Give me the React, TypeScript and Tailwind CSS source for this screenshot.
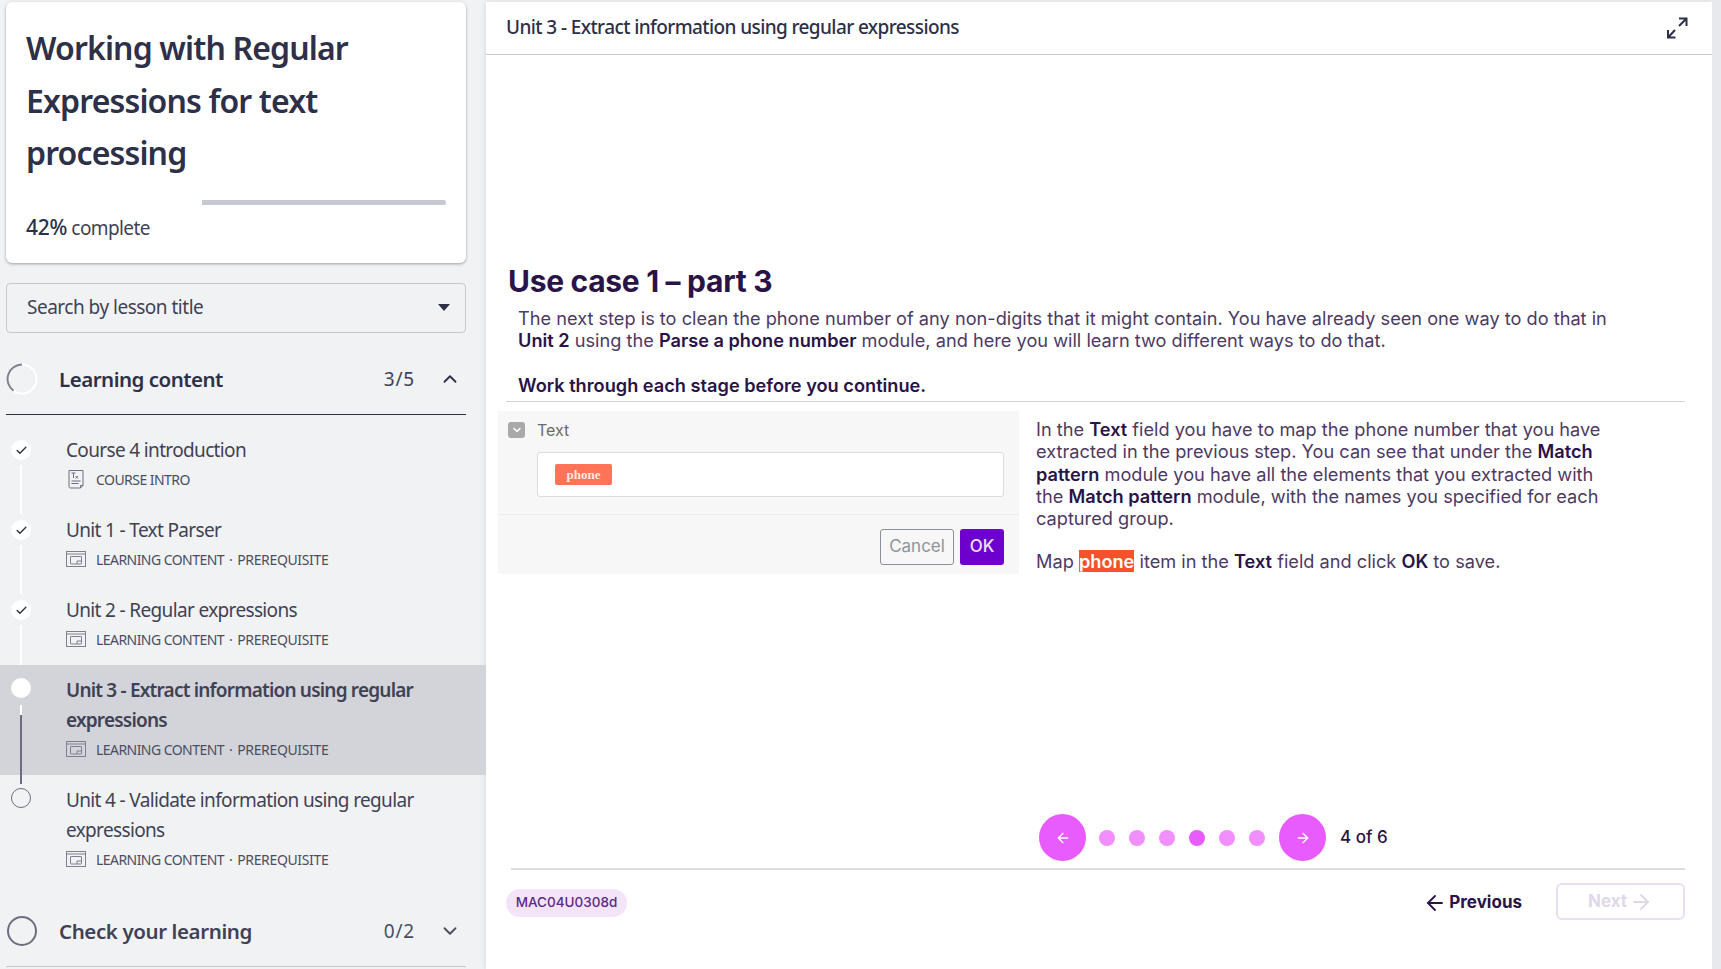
import React from "react";
import { ChevronUp, ChevronDown, Check, ArrowLeft, ArrowRight } from "lucide-react";

const side = { fontFamily: '"Noto Sans", sans-serif' };

function MetaIcon({ intro }: { intro?: boolean }) {
  if (intro) {
    return (
      <svg width="20" height="20" viewBox="0 0 20 20" fill="none" stroke="#6b6f80" strokeWidth="1">
        <path d="M3 1.500h14v15l-2.500 2.500H4.500A1.500 1.500 0 0 1 3 17.500z" />
        <path d="M14.500 19v-2.500H17" />
        <path d="M5.500 4h4M7.500 4v5M9.500 7l2.500 2.500M12 7l-2.500 2.500M5.500 12h9M5.500 14.500h7" />
      </svg>
    );
  }
  return (
    <svg width="20" height="16" viewBox="0 0 20 16" fill="none" stroke="#7d808e" strokeWidth="1">
      <rect x="0.500" y="0.500" width="19" height="15" />
      <path d="M0.500 3h19" />
      <rect x="4.500" y="5.500" width="11" height="7.500" rx="0.500" />
      <path d="M11 13v-3h4.500" />
    </svg>
  );
}

type ItemProps = {
  title: React.ReactNode;
  intro?: boolean;
  state: "done" | "current" | "todo";
  tall?: boolean;
  line?: "white" | "mixed" | "none";
};

function Item({ title, intro, state, tall, line }: ItemProps) {
  return (
    <div className={`relative flex pl-[11px] pr-[40px] pt-[10px] ${tall ? "h-[110px]" : "h-[80px]"} ${state === "current" ? "bg-[#d3d4d9]" : ""}`}>
      {line === "white" && <div className="absolute left-[20px] top-[40px] h-[49px] w-[2px] bg-white" />}
      {line === "mixed" && (
        <div className="absolute left-[20px] top-[40px] z-10 flex h-[79px] w-[2px] flex-col bg-[#6b6e7f]">
          <div className="h-[10px] bg-white" />
        </div>
      )}
      <div className="mt-[5px] h-[20px] w-[20px] shrink-0">
        {state === "done" && (
          <div className="flex h-[20px] w-[20px] items-center justify-center rounded-full bg-white">
            <Check size={13} strokeWidth={2.500} color="#2d3047" />
          </div>
        )}
        {state === "current" && <div className="-mt-[2px] h-[20px] w-[20px] rounded-full bg-white" />}
        {state === "todo" && <div className="-mt-[2px] h-[20px] w-[20px] rounded-full border border-[#6b6e7f]" />}
      </div>
      <div className="ml-[35px] min-w-0">
        <div className={`text-[19px] leading-[30px] text-[#3f4254] ${state === "current" ? "font-semibold tracking-[-0.8px]" : "tracking-[-0.65px]"}`}>{title}</div>
        <div className="-mt-[1px] flex h-[30px] items-center text-[14px] tracking-[-0.55px] text-[#4b4e60]">
          <span className="flex w-[30px] shrink-0 items-center"><MetaIcon intro={intro} /></span>
          {intro ? "COURSE INTRO" : (<>LEARNING CONTENT<span className="mx-[5px]">·</span><span className="tracking-[-0.35px]">PREREQUISITE</span></>)}
        </div>
      </div>
    </div>
  );
}

function Dot({ active }: { active?: boolean }) {
  return <div className={`h-[16px] w-[16px] rounded-full ${active ? "bg-[#e85bfd]" : "bg-[#f08ffd]"}`} />;
}

export default function App() {
  return (
    <div className="flex h-[969px] w-full overflow-hidden bg-[#f1f2f4]">
      <aside className="w-[486px] shrink-0" style={side}>
        <div className="ml-[6px] mr-[20px] mt-[2px] h-[261px] rounded-[6px] bg-white px-[20px] pt-[20px] shadow-[0_1px_3px_rgba(0,0,0,0.35)]">
          <h1 className="text-[32px] font-semibold leading-[52.500px] tracking-[-0.85px] text-[#2d3047]">
            Working with Regular Expressions for text processing
          </h1>
          <div className="mt-[20px] flex h-[5px] w-[420px] rounded-[2px]">
            <div className="w-[42%]" />
            <div className="flex-1 rounded-r-[2px] bg-[#c6c9d1]" />
          </div>
          <div className="mt-[7px] text-[19px] leading-[30px] tracking-[-0.6px] text-[#3f4254]">
            <span className="text-[21px] font-medium tracking-[-0.3px] text-[#2d3047]">42%</span> complete
          </div>
        </div>

        <div className="ml-[6px] mr-[20px] mt-[20px] flex h-[50px] items-center justify-between rounded-[4px] border border-[#c6c9d1] pb-[1px] pl-[20px] pr-[15px] text-[19px] tracking-[-0.5px] text-[#3f4254]">
          Search by lesson title
          <div className="h-0 w-0 border-x-[6px] border-t-[7px] border-x-transparent border-t-[#2d3047]" />
        </div>

        <div className="ml-[6px] mr-[20px] mt-[11px] flex h-[71px] items-center border-b border-[#2d3047]">
          <svg width="32" height="32" viewBox="0 0 32 32" fill="none" className="shrink-0">
            <circle cx="16" cy="16" r="14.500" stroke="#ffffff" strokeWidth="2" />
            <path d="M16 1.500A14.500 14.500 0 0 0 7.500 27.700" stroke="#7d808e" strokeWidth="2" />
          </svg>
          <span className="ml-[21px] flex-1 text-[20.500px] font-semibold tracking-[-0.5px] text-[#2d3047]">Learning content</span>
          <span className="text-[19px] tracking-[0.8px] text-[#3f4254]">3/5</span>
          <span className="ml-[24px] mr-[5px]"><ChevronUp size={22} strokeWidth={2} color="#2d3047" /></span>
        </div>

        <div className="pt-[10px]">
          <Item title="Course 4 introduction" intro state="done" line="white" />
          <Item title="Unit 1 - Text Parser" state="done" line="white" />
          <Item title="Unit 2 - Regular expressions" state="done" line="white" />
          <Item title="Unit 3 - Extract information using regular expressions" state="current" tall line="mixed" />
          <Item title="Unit 4 - Validate information using regular expressions" state="todo" tall />
        </div>

        <div className="ml-[6px] mr-[20px] mt-[11px] flex h-[71px] items-center border-b border-[#c6c9d1]">
          <div className="ml-[1px] h-[30px] w-[30px] shrink-0 rounded-full border-2 border-[#6b6e7f]" />
          <span className="ml-[22px] flex-1 text-[20.500px] font-semibold tracking-[-0.4px] text-[#3f4254]">Check your learning</span>
          <span className="text-[19px] tracking-[0.8px] text-[#4b4e60]">0/2</span>
          <span className="ml-[24px] mr-[5px]"><ChevronDown size={22} strokeWidth={2} color="#4b4e60" /></span>
        </div>
      </aside>

      <main className="mt-[2px] flex w-[1226px] shrink-0 flex-col bg-white shadow-[0_0_6px_rgba(0,0,0,0.12)]" style={{ fontFamily: "Inter, sans-serif" }}>
        <header className="flex h-[53px] shrink-0 items-center justify-between border-b border-[#c6c9d1] pl-[20px] pr-[23px]" style={side}>
          <span className="-mt-[1px] text-[19px] font-medium tracking-[-0.6px] text-[#2d3047]">Unit 3 - Extract information using regular expressions</span>
          <svg width="24" height="24" viewBox="0 0 24 24" fill="none" stroke="#2d3047" strokeWidth="2">
            <path d="M14 2.500h7.500V10M21.500 2.500 14 10M3 14v7.500h7.500M3 21.500 10 14" />
          </svg>
        </header>

        <div className="flex flex-1 flex-col pl-[12px] pr-[27px] text-[#4d3a63]">
          <h2 className="ml-[10px] mt-[204px] text-[30px] font-bold leading-[44px] tracking-[-0.3px] text-[#2a1346]">Use case 1 – part 3</h2>
          <p className="ml-[20px] mt-[4px] w-[1120px] text-[18.200px] leading-[22px]">
            The next step is to clean the phone number of any non-digits that it might contain. You have already seen one way to do that in{" "}
            <b className="font-semibold text-[#2a1346]">Unit 2</b> using the <b className="font-semibold text-[#2a1346]">Parse a phone number</b> module, and here you will learn two different ways to do that.
          </p>
          <p className="ml-[20px] mt-[23px] text-[18.200px] font-semibold leading-[22px] text-[#2a1346]">Work through each stage before you continue.</p>
          <div className="ml-[8px] mt-[5px] border-t border-[#d8d0d8]" />

          <div className="mt-[9px] flex">
            <div className="h-[163px] w-[521px] shrink-0 bg-[#f7f7f7] text-[#6b6b6b]">
              <div className="flex h-[104px] flex-col border-b border-[#ececec] pl-[10px] pr-[15px] pt-[7px]">
                <div className="flex items-center">
                  <div className="flex h-[16px] w-[17px] items-center justify-center rounded-[3px] bg-[#a9a9a9]">
                    <ChevronDown size={12} strokeWidth={3} color="#ffffff" />
                  </div>
                  <span className="ml-[12px] text-[16px]">Text</span>
                </div>
                <div className="ml-[29px] mt-[10px] flex h-[45px] items-center rounded-[3px] border border-[#dcdcdc] bg-white pl-[17px]">
                  <span className="flex h-[21px] w-[57px] items-center justify-center rounded-[2px] bg-[#ff7358] text-[13px] font-bold text-[#ffe9e2]" style={{ fontFamily: '"Liberation Serif", serif' }}>phone</span>
                </div>
              </div>
              <div className="flex justify-end gap-[6px] pr-[15px] pt-[14px]">
                <div className="flex h-[36px] w-[74px] items-center justify-center rounded-[3px] border border-[#8a9198] text-[17px] text-[#8f9499]">Cancel</div>
                <div className="flex h-[36px] w-[44px] items-center justify-center rounded-[3px] bg-[#6d00cc] text-[17px] font-medium text-[#f0e0ff]">OK</div>
              </div>
            </div>
            <div className="ml-[17px] w-[575px] pt-[7px] text-[18.200px] leading-[22.300px]">
              <p>In the <b className="font-semibold text-[#2a1346]">Text</b> field you have to map the phone number that you have extracted in the previous step. You can see that under the <b className="font-semibold text-[#2a1346]">Match pattern</b> module you have all the elements that you extracted with the <b className="font-semibold text-[#2a1346]">Match pattern</b> module, with the names you specified for each captured group.</p>
              <p className="mt-[21px]">Map <b className="bg-[#f4512c] font-semibold text-white">phone</b> item in the <b className="font-semibold text-[#2a1346]">Text</b> field and click <b className="font-semibold text-[#2a1346]">OK</b> to save.</p>
            </div>
          </div>

          <div className="mt-[240px] flex items-center pl-[541px]">
            <div className="flex h-[47px] w-[47px] items-center justify-center rounded-full bg-[#e85bfd]"><ArrowLeft size={16} color="#ffffff" /></div>
            <div className="ml-[13px] flex gap-[14px]">
              <Dot /><Dot /><Dot /><Dot active /><Dot /><Dot />
            </div>
            <div className="ml-[14px] flex h-[47px] w-[47px] items-center justify-center rounded-full bg-[#e85bfd]"><ArrowRight size={16} color="#ffffff" /></div>
            <span className="ml-[14px] text-[17px] font-medium text-[#2a1346]">4 of 6</span>
          </div>
          <div className="ml-[13px] mt-[7px] border-t-2 border-[#e0dbe0]" />
          <div className="mt-[13px] flex items-center">
            <span className="ml-[8px] mt-[2px] flex h-[28px] w-[121px] items-center justify-center rounded-full bg-[#f3e4fa] text-[13.500px] font-medium text-[#5b2a86]">MAC04U0308d</span>
            <div className="flex-1" />
            <span className="mt-[2px] flex items-center gap-[2px] text-[17px] font-bold text-[#2a1346]"><ArrowLeft size={24} strokeWidth={1.800} />Previous</span>
            <span className="ml-[34px] flex h-[37px] w-[129px] items-center justify-center gap-[2px] rounded-[6px] border-2 border-[#e8e0f0] text-[17px] font-bold text-[#e0d8ea]">Next<ArrowRight size={24} strokeWidth={1.800} /></span>
          </div>
        </div>
      </main>
      <div className="flex-1 bg-[#e8e9ec]" />
    </div>
  );
}
